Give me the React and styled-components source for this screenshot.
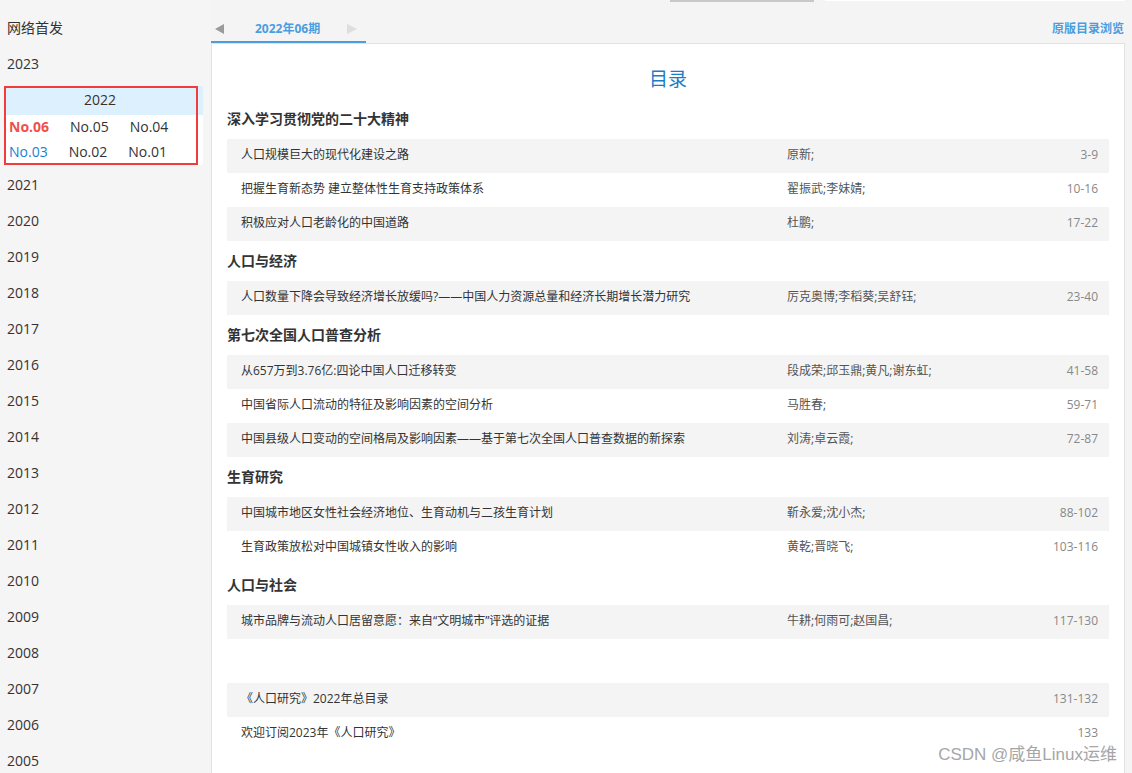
import React from "react";
import styled, { createGlobalStyle } from "styled-components";

const GlobalStyle = createGlobalStyle`
    html, body {
        margin: 0;
        padding: 0;
        height: 100%;
        overflow: hidden;
        background: #f4f4f4;
    }
    body {
        font-family: "Open Sans", "Noto Sans CJK SC", sans-serif;
        color: #333;
    }
`;

const Page = styled.div`
    display: flex;
    height: 773px;
    position: relative;
`;

const Sidebar = styled.div`
    width: 211px;
    flex-shrink: 0;
    background: #f5f5f5;
    padding-top: 10px;
`;

const YearItem = styled.div`
    height: 36px;
    line-height: 36px;
    padding-left: 7px;
    font-size: 14px;
    color: #333;
`;

const YearBlock = styled.div`
    position: relative;
    margin: 4px 8px 2px 4px;
    background: #fff;
    border-radius: 3px;
    &::after {
        content: "";
        position: absolute;
        left: 0;
        top: 0;
        right: 5px;
        bottom: 0;
        border: 2px solid #f03c3c;
        pointer-events: none;
    }
`;

const BlockHead = styled.div`
    height: 25px;
    line-height: 25px;
    padding: 1px 7px 3px 0;
    background: #ddf0fd;
    text-align: center;
    font-size: 14px;
    color: #333;
`;

const IssueRow = styled.div`
    display: flex;
    gap: 21px;
    padding-left: ${p => p.$pad}px;
    height: 25px;
    line-height: 24px;
`;

const Issue = styled.span`
    font-size: 14px;
    color: ${p => (p.$current ? "#f0504a" : p.$blue ? "#1a7ed4" : "#333")};
    font-weight: ${p => (p.$current ? 700 : 400)};
`;

const Main = styled.div`
    flex: 1;
    display: flex;
    flex-direction: column;
    padding-right: 7px;
`;

const TopStrip = styled.div`
    display: flex;
    height: 2px;
`;

const StripPiece = styled.div`
    margin-left: ${p => p.$left}px;
    width: ${p => p.$w}px;
    height: ${p => p.$h}px;
    background: ${p => p.$bg};
`;

const TabBar = styled.div`
    display: flex;
    justify-content: space-between;
    align-items: flex-end;
    height: 41px;
`;

const Tab = styled.div`
    width: 155px;
    height: 39px;
    display: flex;
    align-items: center;
    border-bottom: 2px solid #4a9de0;
`;

const Arrow = styled.span`
    width: 0;
    height: 0;
    border-top: 5px solid transparent;
    border-bottom: 5px solid transparent;
    ${p =>
        p.$dir === "left"
            ? `border-right: 9px solid #9a9a9a; margin-left: 4px;`
            : `border-left: 10px solid #dedede; margin-left: 27px;`}
    margin-top: 15px;
`;

const TabText = styled.span`
    margin-left: 31px;
    font-size: 12px;
    font-weight: 700;
    color: #4a9de0;
    margin-top: 15px;
    line-height: 16px;
`;

const BrowseLink = styled.span`
    font-size: 12px;
    font-weight: 700;
    color: #4a9de0;
    line-height: 16px;
    margin-bottom: 6px;
    margin-right: 1px;
`;

const Panel = styled.div`
    flex: 1;
    background: #fff;
    border: 1px solid #e2e2e2;
    border-bottom: none;
    padding: 15px 15px 0 15px;
`;

const Title = styled.div`
    height: 40px;
    line-height: 40px;
    text-align: center;
    font-size: 19px;
    color: #1a7cc8;
`;

const SectionHead = styled.div`
    height: 40px;
    line-height: 40px;
    font-size: 14px;
    font-weight: 700;
    color: #333;
`;

const Row = styled.div`
    display: flex;
    align-items: center;
    height: 34px;
    box-sizing: border-box;
    padding: 0 11px 4px 14px;
    background: ${p => (p.$shade ? "#f4f4f4" : "#fff")};
    font-size: 12px;
`;

const RowTitle = styled.span`
    width: 546px;
    color: #333;
`;

const RowAuthor = styled.span`
    flex: 1;
    color: #555;
`;

const RowPages = styled.span`
    color: #888;
    text-align: right;
`;

const Extra = styled.div`
    margin-top: 44px;
`;

const Watermark = styled.div`
    position: absolute;
    right: 15px;
    bottom: 8px;
    font-size: 17px;
    color: #a6a6a6;
    font-family: "Liberation Sans", "Noto Sans CJK SC", sans-serif;
`;

const years = [];
for (let y = 2021; y >= 2005; y--) years.push(String(y));

const sections = [
    {
        name: "深入学习贯彻党的二十大精神",
        rows: [
            ["人口规模巨大的现代化建设之路", "原新;", "3-9"],
            ["把握生育新态势 建立整体性生育支持政策体系", "翟振武;李妹婧;", "10-16"],
            ["积极应对人口老龄化的中国道路", "杜鹏;", "17-22"],
        ],
    },
    {
        name: "人口与经济",
        rows: [
            ["人口数量下降会导致经济增长放缓吗?——中国人力资源总量和经济长期增长潜力研究", "厉克奥博;李稻葵;吴舒钰;", "23-40"],
        ],
    },
    {
        name: "第七次全国人口普查分析",
        rows: [
            ["从657万到3.76亿:四论中国人口迁移转变", "段成荣;邱玉鼎;黄凡;谢东虹;", "41-58"],
            ["中国省际人口流动的特征及影响因素的空间分析", "马胜春;", "59-71"],
            ["中国县级人口变动的空间格局及影响因素——基于第七次全国人口普查数据的新探索", "刘涛;卓云霞;", "72-87"],
        ],
    },
    {
        name: "生育研究",
        rows: [
            ["中国城市地区女性社会经济地位、生育动机与二孩生育计划", "靳永爱;沈小杰;", "88-102"],
            ["生育政策放松对中国城镇女性收入的影响", "黄乾;晋晓飞;", "103-116"],
        ],
    },
    {
        name: "人口与社会",
        rows: [
            ["城市品牌与流动人口居留意愿：来自“文明城市”评选的证据", "牛耕;何雨可;赵国昌;", "117-130"],
        ],
    },
];

const extras = [
    ["《人口研究》2022年总目录", "", "131-132"],
    ["欢迎订阅2023年《人口研究》", "", "133"],
];

function TocRow({ row, shade }) {
    return (
        <Row $shade={shade}>
            <RowTitle>{row[0]}</RowTitle>
            <RowAuthor>{row[1]}</RowAuthor>
            <RowPages>{row[2]}</RowPages>
        </Row>
    );
}

export default function App() {
    return (
        <Page>
            <GlobalStyle />
            <Sidebar>
                <YearItem>网络首发</YearItem>
                <YearItem>2023</YearItem>
                <YearBlock>
                    <BlockHead>2022</BlockHead>
                    <IssueRow $pad={5}>
                        <Issue $current>No.06</Issue>
                        <Issue>No.05</Issue>
                        <Issue>No.04</Issue>
                    </IssueRow>
                    <IssueRow $pad={5}>
                        <Issue $blue>No.03</Issue>
                        <Issue>No.02</Issue>
                        <Issue>No.01</Issue>
                    </IssueRow>
                </YearBlock>
                {years.map(y => (
                    <YearItem key={y}>{y}</YearItem>
                ))}
            </Sidebar>
            <Main>
                <TopStrip>
                    <StripPiece $left={459} $w={144} $h={2} $bg="#c8c8c8" />
                    <StripPiece $left={11} $w={300} $h={1} $bg="#ffffff" />
                </TopStrip>
                <TabBar>
                    <Tab>
                        <Arrow $dir="left" />
                        <TabText>2022年06期</TabText>
                        <Arrow $dir="right" />
                    </Tab>
                    <BrowseLink>原版目录浏览</BrowseLink>
                </TabBar>
                <Panel>
                    <Title>目录</Title>
                    {sections.map(sec => (
                        <div key={sec.name}>
                            <SectionHead>{sec.name}</SectionHead>
                            {sec.rows.map((r, i) => (
                                <TocRow key={r[0]} row={r} shade={i % 2 === 0} />
                            ))}
                        </div>
                    ))}
                    <Extra>
                        {extras.map((r, i) => (
                            <TocRow key={r[0]} row={r} shade={i % 2 === 0} />
                        ))}
                    </Extra>
                </Panel>
            </Main>
            <Watermark>CSDN @咸鱼Linux运维</Watermark>
        </Page>
    );
}
